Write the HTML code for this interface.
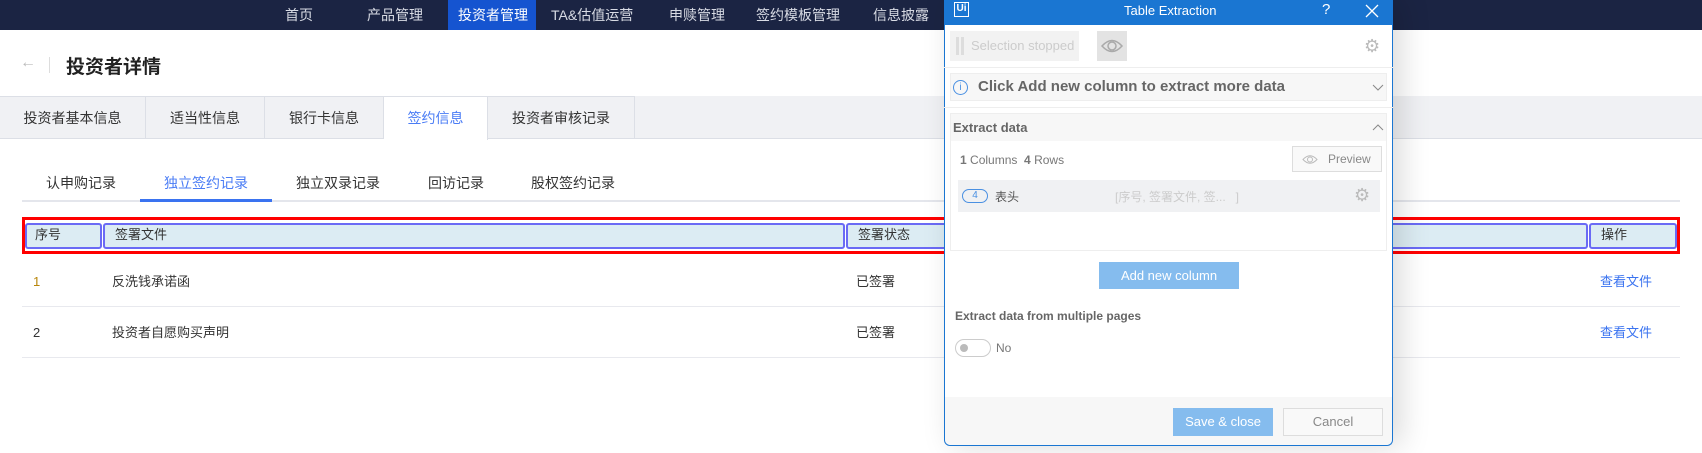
<!DOCTYPE html>
<html><head><meta charset="utf-8"><style>
*{margin:0;padding:0;box-sizing:border-box}
body{width:1702px;height:453px;overflow:hidden;background:#fff;font-family:"Liberation Sans","Noto Sans CJK SC",sans-serif;position:relative;color:#333;font-size:13px}
.a{position:absolute;white-space:nowrap}
.nav{left:0;top:0;width:1702px;height:30px;background:#1b2443}
.nav span{position:absolute;top:5px;color:#d8dbe4;font-size:14px;line-height:20px}
.tabbar{left:0;top:96px;width:1702px;height:43px;background:#f0f1f4;border-bottom:1px solid #dcdfe6}
.tab{top:96px;height:43px;border-right:1px solid #dcdfe6;border-top:1px solid #dcdfe6;font-size:14px;line-height:42px;text-align:center;color:#333}
.st{top:173px;font-size:14px;color:#333;line-height:20px}
.r{line-height:20px}
.hc{top:223px;height:26px;background:#dcecf3;border:2px solid #6a6af5;border-radius:3px;padding:0 10px;line-height:20px}
.dlg{left:944px;top:0;width:449px;height:446px;background:#fff;border:1px solid #1a76d2;border-top:none;border-radius:0 0 6px 6px;box-shadow:8px 0 30px rgba(0,0,0,.15)}
.b{font-weight:bold;color:#666}
</style></head><body>
<div class="a nav">
<span style="left:285px">首页</span>
<span style="left:367px">产品管理</span>
<div class="a" style="left:448px;top:0;width:88px;height:30px;background:#1554d0"></div>
<span style="left:458px;color:#fff">投资者管理</span>
<span style="left:551px">TA&amp;估值运营</span>
<span style="left:669px">申赎管理</span>
<span style="left:756px">签约模板管理</span>
<span style="left:873px">信息披露</span>
</div>
<div class="a" style="left:20px;top:54px;color:#bbb;font-size:16px">←</div>
<div class="a" style="left:49px;top:57px;width:1px;height:16px;background:#ddd"></div>
<div class="a" style="left:66px;top:52px;font-size:19px;font-weight:bold;color:#222">投资者详情</div>
<div class="a tabbar"></div>
<div class="a tab" style="left:0;width:146px">投资者基本信息</div>
<div class="a tab" style="left:146px;width:119px">适当性信息</div>
<div class="a tab" style="left:265px;width:119px">银行卡信息</div>
<div class="a tab" style="left:384px;width:104px;background:#fff;height:44px;color:#4a7cf5">签约信息</div>
<div class="a tab" style="left:488px;width:147px">投资者审核记录</div>
<div class="a st" style="left:46px">认申购记录</div>
<div class="a st" style="left:164px;color:#4a7cf5">独立签约记录</div>
<div class="a st" style="left:296px">独立双录记录</div>
<div class="a st" style="left:428px">回访记录</div>
<div class="a st" style="left:531px">股权签约记录</div>
<div class="a" style="left:22px;top:200px;width:1658px;height:2px;background:#e4e6ec"></div>
<div class="a" style="left:140px;top:199px;width:132px;height:3px;background:#3a73f0"></div>
<div class="a" style="left:22px;top:217px;width:1658px;height:37px;border:3px solid #f00;background:#fff"></div>
<div class="a hc" style="left:25px;width:77px;padding-left:8px">序号</div>
<div class="a hc" style="left:103px;width:742px">签署文件</div>
<div class="a hc" style="left:846px;width:742px">签署状态</div>
<div class="a hc" style="left:1589px;width:88px">操作</div>
<div class="a r" style="left:33px;top:272px;color:#b8860b">1</div>
<div class="a r" style="left:112px;top:272px">反洗钱承诺函</div>
<div class="a r" style="left:856px;top:272px">已签署</div>
<div class="a r" style="left:1600px;top:272px;color:#3a73f0">查看文件</div>
<div class="a" style="left:22px;top:306px;width:1658px;height:1px;background:#e8e9ee"></div>
<div class="a r" style="left:33px;top:323px">2</div>
<div class="a r" style="left:112px;top:323px">投资者自愿购买声明</div>
<div class="a r" style="left:856px;top:323px">已签署</div>
<div class="a r" style="left:1600px;top:323px;color:#3a73f0">查看文件</div>
<div class="a" style="left:22px;top:357px;width:1658px;height:1px;background:#e8e9ee"></div>

<div class="a dlg"></div>
<div class="a" style="left:944px;top:0;width:449px;height:25px;background:#1a76d2"></div>
<div class="a" style="left:954px;top:2px;width:15px;height:15px;border:1.5px solid #fff;color:#fff;font-size:10px;font-weight:bold;line-height:12px;text-align:center">Ui</div>
<div class="a" style="left:1124px;top:3px;color:#fff;font-size:13px">Table Extraction</div>
<div class="a" style="left:1322px;top:1px;color:#fff;font-size:15px">?</div>
<svg class="a" style="left:1365px;top:4px" width="14" height="14"><path d="M1 1L13 13M13 1L1 13" stroke="#fff" stroke-width="1.3"/></svg>
<div class="a" style="left:950px;top:31px;width:129px;height:30px;background:#f2f2f2"></div>
<div class="a" style="left:956px;top:37px;width:3px;height:18px;background:#ddd"></div>
<div class="a" style="left:961px;top:37px;width:3px;height:18px;background:#ddd"></div>
<div class="a" style="left:971px;top:38px;color:#ccc;font-size:13px">Selection stopped</div>
<div class="a" style="left:1097px;top:31px;width:30px;height:30px;background:#e3e3e3"></div>
<svg class="a" style="left:1101px;top:38px" width="22" height="16"><path d="M1 8Q11-3 21 8Q11 19 1 8Z" fill="none" stroke="#aaa" stroke-width="1.5"/><circle cx="11" cy="8" r="4" fill="none" stroke="#aaa" stroke-width="1.5"/></svg>
<div class="a" style="left:1364px;top:36px;color:#bbb;font-size:18px">⚙</div>
<div class="a" style="left:944px;top:67px;width:449px;height:1px;background:#eee"></div>
<div class="a" style="left:950px;top:73px;width:437px;height:28px;background:#f7f7f7;border:1px solid #eee"></div>
<div class="a" style="left:953px;top:80px;width:15px;height:15px;border:1px solid #4a90e2;border-radius:50%;color:#4a90e2;font-size:10px;text-align:center;line-height:13px">i</div>
<div class="a b" style="left:978px;top:78px;font-size:15px">Click Add new column to extract more data</div>
<svg class="a" style="left:1372px;top:84px" width="12" height="7"><path d="M1 1L6 6L11 1" fill="none" stroke="#888"/></svg>
<div class="a" style="left:944px;top:107px;width:449px;height:1px;background:#eee"></div>
<div class="a" style="left:950px;top:113px;width:437px;height:138px;border:1px solid #eee"></div>
<div class="a" style="left:951px;top:114px;width:435px;height:27px;background:#f7f7f7"></div>
<div class="a b" style="left:953px;top:120px;font-size:13px">Extract data</div>
<svg class="a" style="left:1372px;top:124px" width="12" height="7"><path d="M1 6L6 1L11 6" fill="none" stroke="#888"/></svg>
<div class="a" style="left:960px;top:153px;color:#777;font-size:12px"><b>1</b> Columns &nbsp;<b>4</b> Rows</div>
<div class="a" style="left:1292px;top:146px;width:90px;height:26px;border:1px solid #ddd;background:#f9f9f9;color:#888;font-size:12px;line-height:24px;padding-left:35px">Preview</div>
<svg class="a" style="left:1302px;top:154px" width="16" height="11"><path d="M1 5.5Q8-2 15 5.5Q8 13 1 5.5Z" fill="none" stroke="#bbb"/><circle cx="8" cy="5.5" r="2.5" fill="none" stroke="#bbb"/></svg>
<div class="a" style="left:958px;top:180px;width:422px;height:32px;background:#f0f1f3"></div>
<div class="a" style="left:962px;top:189px;width:26px;height:14px;border:1px solid #4a90e2;border-radius:8px;color:#4a90e2;font-size:10px;text-align:center;line-height:12px">4</div>
<div class="a" style="left:995px;top:188px;color:#555;font-size:12px">表头</div>
<div class="a" style="left:1115px;top:188px;color:#ccc;font-size:12px">[序号, 签署文件, 签...&nbsp;&nbsp; ]</div>
<div class="a" style="left:1354px;top:185px;color:#bbb;font-size:18px">⚙</div>
<div class="a" style="left:1099px;top:262px;width:140px;height:27px;background:#85bcee;color:#fff;font-size:13px;text-align:center;line-height:27px">Add new column</div>
<div class="a b" style="left:955px;top:309px;font-size:12px">Extract data from multiple pages</div>
<div class="a" style="left:955px;top:339px;width:36px;height:18px;border:1px solid #ccc;border-radius:9px"></div>
<div class="a" style="left:960px;top:344px;width:8px;height:8px;background:#bbb;border-radius:50%"></div>
<div class="a" style="left:996px;top:341px;color:#777;font-size:12px">No</div>
<div class="a" style="left:945px;top:397px;width:447px;height:48px;background:#f7f7f7;border-radius:0 0 6px 6px"></div>
<div class="a" style="left:1173px;top:408px;width:100px;height:28px;background:#85bcee;color:#fff;text-align:center;line-height:28px;font-size:13px">Save &amp; close</div>
<div class="a" style="left:1283px;top:408px;width:100px;height:28px;border:1px solid #ddd;background:#f9f9f9;color:#888;text-align:center;line-height:26px;font-size:13px">Cancel</div>
</body></html>
